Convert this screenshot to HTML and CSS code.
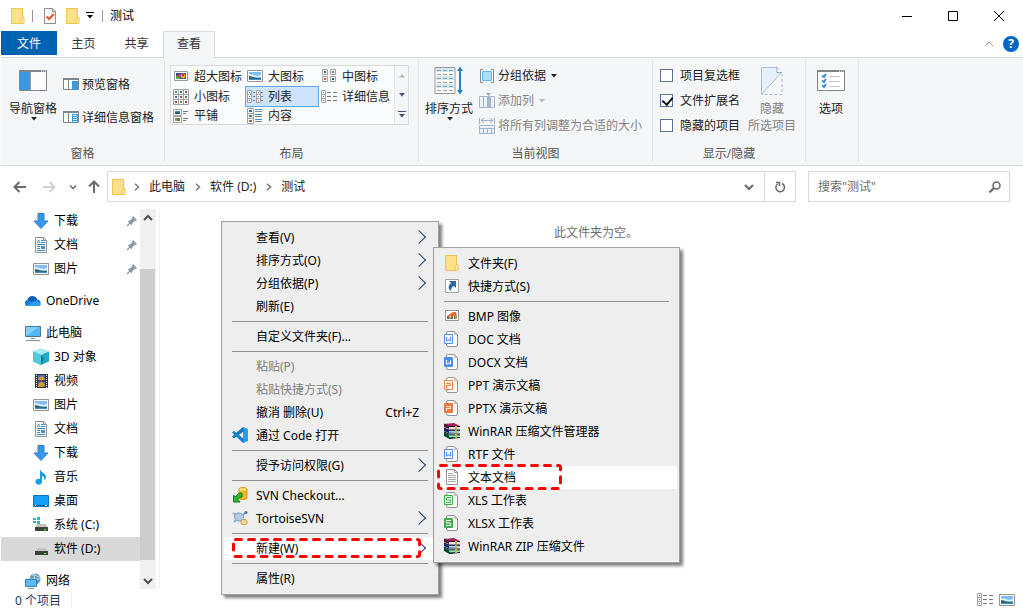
FILE: index.html
```html
<!DOCTYPE html>
<html lang="zh-CN">
<head>
    <meta charset="UTF-8">
    <meta name="viewport" content="width=device-width, initial-scale=1.0">
    <title>测试</title>
    <link rel="stylesheet" href="styles.css">
</head>
<body>
    <!-- shared icons -->
    <svg class="sprite" aria-hidden="true">
        <symbol id="i-folder" viewBox="0 0 16 16">
            <path d="M1.500 .5h11v11l1 4h-12z" fill="#ffe18a" stroke="#efc44f"/>
            <path d="M12.500 9.500h1.500v6h-3v-3.500z" fill="#ffeeb0" stroke="#efc44f"/>
        </symbol>
        <symbol id="i-check-page" viewBox="0 0 16 16">
            <path d="M2.500 .5h8l3 3v12h-11z" fill="#fafafa" stroke="#8d8d8d"/>
            <path d="M10.500 .5v3h3" fill="none" stroke="#8d8d8d"/>
            <path d="M4.500 8.500l2.500 2.500 5-5" fill="none" stroke="#f0561d" stroke-width="2"/>
        </symbol>
        <symbol id="i-down" viewBox="0 0 6 4"><path d="M0 0h6L3 3.500z" fill="currentColor"/></symbol>
        <symbol id="i-up" viewBox="0 0 6 4"><path d="M0 3.500h6L3 0z" fill="currentColor"/></symbol>
        <symbol id="i-more" viewBox="0 0 8 7"><path d="M0 0h8v1H0zM1 3h6L4 6.500z" fill="currentColor"/></symbol>
        <symbol id="i-chev-right" viewBox="0 0 6 8"><path d="M1 .8L4.500 4 1 7.200" fill="none" stroke="currentColor" stroke-width="1.500"/></symbol>
        <symbol id="i-chev-down" viewBox="0 0 10 8"><path d="M1 2l4 4 4-4" fill="none" stroke="currentColor" stroke-width="2"/></symbol>
        <symbol id="i-chev-up" viewBox="0 0 10 8"><path d="M1 6l4-4 4 4" fill="none" stroke="currentColor" stroke-width="2"/></symbol>
        <symbol id="i-nav-pane" viewBox="0 0 28 22">
            <path d="M.5 .5h27v20H.5z" fill="#fafcfd" stroke="#7e8790"/>
            <path d="M0 0h28v2H0z" fill="#7e8790"/>
            <path d="M22 1h1M24 1h1M26 1h1" stroke="#fff"/>
            <path d="M1 2h10v18H1z" fill="#3f97dd"/><path d="M11.500 2v18" stroke="#9aa3ab"/>
        </symbol>
        <symbol id="i-preview" viewBox="0 0 16 13">
            <path d="M.5 .5h15v11H.5z" fill="#fff" stroke="#7e8790"/>
            <path d="M0 0h16v2H0zM5 2h1v10H5z" fill="#7e8790"/><path d="M9 3h6v9H9z" fill="#3f97dd"/>
        </symbol>
        <symbol id="i-details-pane" viewBox="0 0 16 13">
            <use href="#i-preview"/>
            <path d="M10 4.500h4M10 6.500h4M10 8.500h4M10 10.500h4" stroke="#d7ebfb"/>
        </symbol>
        <symbol id="i-xl" viewBox="0 0 16 16">
            <path d="M1.500 3.500h13v9h-13z" fill="#fff" stroke="#989898"/>
            <path d="M3 5h10v6H3z" fill="#314ba8"/><path d="M3 8h4v3H3z" fill="#4fa94c"/>
            <circle cx="6" cy="7.500" r="1.500" fill="#d83a3a"/><circle cx="10" cy="8" r="2.500" fill="#f0a421"/><path d="M9 6h2v2H9z" fill="#c8351f"/>
        </symbol>
        <symbol id="i-picture" viewBox="0 0 16 16">
            <path d="M.5 2.500h15v11H.5z" fill="#fff" stroke="#939393"/>
            <path d="M2 4h12v8H2z" fill="#7fbdf0"/><path d="M2 6l5 1 3 1 4-1v2H2z" fill="#dcf0f7"/>
            <path d="M2 8c3 0 4 1 7 2h5v1H2z" fill="#326a76"/><path d="M2 11h12v1H2z" fill="#3e8cc8"/>
        </symbol>
        <symbol id="i-medium" viewBox="0 0 16 16">
            <path d="M1.500 1.500h5v5h-5zM9.500 1.500h5v5h-5zM1.500 8.500h5v5h-5zM9.500 8.500h5v5h-5z" fill="#fff" stroke="#a0a0a0"/>
            <path d="M3 3h2v2H3z" fill="#315fa8"/><path d="M11 3h2v2h-2z" fill="#3f8b87"/><path d="M3 10h2v2H3z" fill="#d04b31"/><path d="M11 10h2v2h-2z" fill="#3a4b96"/>
        </symbol>
        <symbol id="i-small" viewBox="0 0 16 16">
            <path d="M.5 .5h15v15H.5zM5.500 .5v15M10.500 .5v15M.5 5.500h15M.5 10.500h15" fill="#fff" stroke="#a0a0a0"/>
            <path d="M2 2h2v2H2zM12 7h2v2h-2zM7 12h2v2H7z" fill="#3e9150"/><path d="M7 2h2v2H7zM2 7h2v2H2z" fill="#3967ac"/><path d="M12 2h2v2h-2zM7 7h2v2H7zM2 12h2v2H2zM12 12h2v2h-2z" fill="#ae4545"/>
        </symbol>
        <symbol id="i-list" viewBox="0 0 16 16">
            <path d="M.5 1.500h4v12h-4zM.5 5.500h4M.5 9.500h4M9.500 1.500h4v12h-4zM9.500 5.500h4M9.500 9.500h4" fill="#fff" stroke="#a0a0a0"/>
            <path d="M2 3h1v1H2zM11 7h1v1h-1z" fill="#3967ac"/><path d="M2 7h1v1H2zM11 3h1v1h-1z" fill="#3e9150"/><path d="M2 11h1v1H2zM11 11h1v1h-1z" fill="#c94040"/>
            <path d="M6 3.500h2M6 7.500h2M6 11.500h2M14 3.500h2M14 7.500h2M14 11.500h2" stroke="#777"/>
        </symbol>
        <symbol id="i-details" viewBox="0 0 16 16">
            <path d="M.5 1.500h4v12h-4zM.5 5.500h4M.5 9.500h4" fill="#fff" stroke="#a0a0a0"/>
            <path d="M2 3h1v1H2z" fill="#3967ac"/><path d="M2 7h1v1H2z" fill="#3e9150"/><path d="M2 11h1v1H2z" fill="#c94040"/>
            <path d="M6 3.500h4M12 3.500h4M6 7.500h4M12 7.500h4M6 11.500h4M12 11.500h4" stroke="#777"/>
        </symbol>
        <symbol id="i-tiles" viewBox="0 0 16 16">
            <path d="M.5 1.500h8v6h-8zM.5 8.500h8v6h-8z" fill="#fff" stroke="#a0a0a0"/>
            <path d="M2 3h5v3H2z" fill="#4189bd"/><path d="M2 4.500h5V6H2z" fill="#1f4f50"/><path d="M2 10h3v3H2z" fill="#d77839"/><path d="M4 10h3v3H4z" fill="#47904d"/>
            <path d="M10 3.500h5M10 5.500h3M10 10.500h5M10 12.500h3" stroke="#777"/>
        </symbol>
        <symbol id="i-content" viewBox="0 0 16 16">
            <path d="M.5 .5h6v15h-6zM.5 5.500h6M.5 10.500h6" fill="#fff" stroke="#a0a0a0"/>
            <path d="M2 2h3v2H2z" fill="#3967ac"/><path d="M2 7h3v2H2z" fill="#3e9150"/><path d="M2 12h3v2H2z" fill="#b35b43"/>
            <path d="M8 1.500h7M8 6.500h7M8 11.500h7" stroke="#3d8fd4"/><path d="M8 3.500h7M8 8.500h7M8 13.500h7" stroke="#8a8a8a"/>
        </symbol>
        <symbol id="i-sort" viewBox="0 0 30 30">
            <path d="M1 1.500h20v26H1z" fill="#fff" stroke="#969696"/>
            <path d="M2 2h18v4H2zM2 10h18v4H2zM2 18h18v4H2z" fill="#cdeaf3"/>
            <path d="M3 4.500h16M3 8.500h16M3 12.500h16M3 16.500h16M3 20.500h16M3 24.500h16" stroke="#9b9b9b" stroke-dasharray="4 2"/>
            <path d="M26 3v23" stroke="#2580c7" stroke-width="2"/><path d="M23 5l3-4.500 3 4.500zM23 24l3 4.500 3-4.500z" fill="#2580c7"/>
        </symbol>
        <symbol id="i-group" viewBox="0 0 16 16">
            <path d="M4 1.500H1.500v13H4M12 1.500h2.500v13H12" fill="none" stroke="#7d8a96"/>
            <path d="M3.500 3.500h9v9h-9z" fill="#a9ddff" stroke="#66b5e8"/>
        </symbol>
        <symbol id="i-addcol" viewBox="0 0 16 16">
            <path d="M.5 3.500h15v11H.5zM4.500 3.500v11M11.500 3.500v11" fill="#eef3fa" stroke="#a3b4d0"/>
            <path d="M8 3h3v12H8z" fill="#a3b4d0"/><path d="M7 0h5L9.500 3z" fill="#8fa4c6"/>
        </symbol>
        <symbol id="i-fitcol" viewBox="0 0 16 16">
            <path d="M.5 0v6M15.500 0v6M2 2.500h12M5 0L2 2.500l3 2.500M11 0l3 2.500L11 5" fill="none" stroke="#9bafcf"/>
            <path d="M.5 7.500h15v8H.5zM.5 10.500h15M4.500 10.500v5M8.500 10.500v5M12.500 10.500v5" fill="#e9f0f9" stroke="#a3b4d0"/>
        </symbol>
        <symbol id="i-hide" viewBox="0 0 22 30">
            <path d="M.5 28.500V1.500h16l4 5z" fill="#e6effb" stroke="#adbdd5"/>
            <path d="M16 1.500v5h5" fill="#fff" stroke="#8fa4c6"/>
            <path d="M21 8v20.500H1" fill="none" stroke="#adbdd5" stroke-dasharray="3 2"/>
        </symbol>
        <symbol id="i-options" viewBox="0 0 28 22">
            <path d="M.5 .5h27v20H.5z" fill="#fff" stroke="#858585"/><path d="M0 0h28v2H0z" fill="#858585"/>
            <path d="M22 1h1M24 1h1M26 1h1" stroke="#fff"/>
            <path d="M5 5.500l2 1.500 2-3M5 10.500l2 1.500 2-3M5 15.500l2 1.500 2-3" fill="none" stroke="#3990d8" stroke-width="2"/>
            <path d="M12 6.500h11M12 11.500h11M12 16.500h11" stroke="#c3c3c3"/>
        </symbol>
        <symbol id="i-arrow" viewBox="0 0 14 12"><path d="M13 6H2M6.500 1L1.500 6l5 5" fill="none" stroke="currentColor" stroke-width="2"/></symbol>
        <symbol id="i-pin" viewBox="0 0 12 12">
            <path d="M7 1l4 4-1 1-1-.5L6.500 8 6 10.500 1.500 6 4 5.500 6.500 3 6 2z" fill="#8b9aa6"/><path d="M4.500 7.500L1 11" stroke="#8b9aa6" stroke-width="1.500"/>
        </symbol>
        <symbol id="i-download" viewBox="0 0 16 16"><path d="M5 .5h6V8h4l-7 7.500L1 8h4z" fill="#3a96e8" stroke="#2c7ecb"/></symbol>
        <symbol id="i-doc" viewBox="0 0 16 16">
            <path d="M2.500 .5h8l3 3v12h-11z" fill="#fff" stroke="#8b9298"/><path d="M10.500 .5v3h3" fill="none" stroke="#8b9298"/>
            <path d="M4 6l1.500-3L7 6M8 3.500h2M8 5.500h4M4 7.500h8M4 9.500h3M4 11.500h3M4 13.500h8" fill="none" stroke="#3288c2"/><path d="M8 9h4v3H8z" fill="#4d91b5"/>
        </symbol>
        <symbol id="i-cloud" viewBox="0 0 16 16">
            <path d="M3 13a3 3 0 0 1-.5-6A5 5 0 0 1 12 6.500 3.300 3.300 0 0 1 13 13z" fill="#1b7fdb"/>
            <path d="M2.500 7A5 5 0 0 1 12 6.500L8 9z" fill="#0a5cb0"/><path d="M3 13l5-4.500 4-.5 4 3a2.500 2.500 0 0 1-3 2z" fill="#29a0ef"/>
        </symbol>
        <symbol id="i-pc" viewBox="0 0 16 16">
            <path d="M.5 1.500h15v10H.5z" fill="#54b8f7" stroke="#4a7794"/><path d="M1 11V2h13z" fill="#83d0ff"/>
            <path d="M6 13h4v1H6zM1 15h14v1H1z" fill="#7b8d9b"/>
        </symbol>
        <symbol id="i-3d" viewBox="0 0 16 16">
            <path d="M8 0l8 2.500v10L8 16l-8-3.500v-10z" fill="#24a9c4"/><path d="M0 2.500L8 0l8 2.500L8 6z" fill="#a2eff5"/><path d="M0 2.500L8 6v10l-8-3.500z" fill="#55c9dc"/><path d="M8 6l3 4-3 6z" fill="#0d7f9c"/>
        </symbol>
        <symbol id="i-video" viewBox="0 0 16 16">
            <path d="M2 1h13v14H2z" fill="#333"/><path d="M5 2h7v12H5z" fill="#4471bb"/><path d="M5 5l4-2 3 3-2 2H6zM5 11l4-3 3 4-2 2H5z" fill="#d19b31"/><path d="M5 7.500h7v1H5z" fill="#202020"/>
            <path d="M3.500 2v13M13.500 2v13" stroke="#fff" stroke-dasharray="1 1"/>
        </symbol>
        <symbol id="i-music" viewBox="0 0 16 16"><path d="M7 0c1 4 6 4 6 8 0 2-1 3-2 3 1-3-1-4-2-4v5.500A3.300 3 0 1 1 7 10z" fill="#149bf0"/></symbol>
        <symbol id="i-desktop" viewBox="0 0 16 16">
            <path d="M.5 2.500h15v11H.5z" fill="#12a0fb" stroke="#0873bf"/><path d="M1 12h14v1H1z" fill="#08609e"/><path d="M2 12h1v1H2zM12 12h2v1h-2z" fill="#fff"/>
        </symbol>
        <symbol id="i-disk" viewBox="0 0 16 16">
            <path d="M4 7h9l2 4H2z" fill="#c4c4c4"/><path d="M2 10h13v4H2z" fill="#404040"/><path d="M11 12h2v1h-2z" fill="#3cff4b"/>
        </symbol>
        <symbol id="i-sysdisk" viewBox="0 0 16 16">
            <use href="#i-disk"/><path d="M0 1h3v2H0zM4 0h3v3H4zM0 4h3v2H0zM4 4h3v3H4z" fill="#18b5ef"/>
        </symbol>
        <symbol id="i-network" viewBox="0 0 16 16">
            <circle cx="10" cy="6" r="5.500" fill="#6095b5"/><path d="M7 2c4-1 5 2 8 2M9 1l1 10M5 6h10" stroke="#c5e0ed" fill="none"/>
            <path d="M.5 6.500h11v7H.5z" fill="#5dbaf6" stroke="#2d83bb"/><path d="M3 15.500h6" stroke="#78909e"/>
        </symbol>
        <symbol id="i-vscode" viewBox="0 0 16 16">
            <path d="M11 0l5 2v12l-5 2z" fill="#25a0e8"/><path d="M11 0L0 9.500l2 2L12 4z" fill="#1577bd"/><path d="M0 5.500l2-1.500 10 8-1 4z" fill="#1082ce"/>
        </symbol>
        <symbol id="i-svn" viewBox="0 0 16 16">
            <path d="M7 2c0-2 8-2 8 0v9c0 2-8 2-8 0z" fill="#f3b62a" stroke="#d39a18"/><ellipse cx="11" cy="2.500" rx="3.500" ry="1.300" fill="#ffe37b"/>
            <path d="M10 6C7 6 5 7 4 10L1.500 8.500V15h6.500l-2-2.500c1-2 2-2 4-2.500z" fill="#2db92b" stroke="#187a18"/>
        </symbol>
        <symbol id="i-tortoise" viewBox="0 0 16 16">
            <path d="M1 3l4 3M2 12l3-3M11 5l3-3" stroke="#8fb0d2" stroke-width="2"/><ellipse cx="7" cy="7" rx="4.500" ry="4" fill="#b4cbec" stroke="#7c9bcb"/>
            <circle cx="14" cy="2.500" r="1.500" fill="#4b779e"/><path d="M9 11c0-2 6-2 6 0v2c0 2-6 2-6 0z" fill="#f3dc9c" stroke="#c9a14a"/>
        </symbol>
        <symbol id="i-shortcut" viewBox="0 0 16 16">
            <path d="M1.500 1.500h13v13h-13z" fill="#fff" stroke="#a5a5a5"/><path d="M5 3h7v7l-2-2c-2 1-3 2-3 5-4-3-2-6 0-8z" fill="#2c65a8"/>
        </symbol>
        <symbol id="i-bmp" viewBox="0 0 16 16">
            <path d="M1.500 2.500h13v10h-13z" fill="#fff" stroke="#9a9a9a"/><path d="M3 8l3-2 3-2h3l1 4z" fill="#ef6a32"/><path d="M3 8h2v3H3zM7 8h2v3H7zM10 8h1v3h-1z" fill="#8a6241"/><path d="M11 7h2v4h-2zM5 9h2v2H5z" fill="#8aa874"/>
        </symbol>
        <symbol id="i-page" viewBox="0 0 16 16">
            <path d="M2.500 3V2q0-1.500 1.500-1.500h6.500l3 3V14q0 1.500-1.500 1.500H4q-1.500 0-1.500-1.500z" fill="#fff" stroke="#949494"/><path d="M10 0v4h4z" fill="#c2c2c2"/>
        </symbol>
        <symbol id="i-doc-old" viewBox="0 0 16 16">
            <use href="#i-page"/><path d="M.5 3.500h8v9h-8z" fill="#fff" stroke="#4f8bee"/><path d="M2.500 6v4h1L4.500 8.500 5.500 10h1V6" fill="none" stroke="#4f8bee"/>
        </symbol>
        <symbol id="i-doc-new" viewBox="0 0 16 16">
            <use href="#i-page"/><rect y="3" width="9" height="10" rx="1" fill="#4f8bee"/><path d="M2.500 6v4h1L4.500 8.500 5.500 10h1V6" fill="none" stroke="#fff"/>
        </symbol>
        <symbol id="i-ppt-old" viewBox="0 0 16 16">
            <use href="#i-page"/><path d="M.5 3.500h8v9h-8z" fill="#fff" stroke="#f47d4b"/><path d="M2 6.500h4.500v2H2.500V11" fill="none" stroke="#f47d4b"/>
        </symbol>
        <symbol id="i-ppt-new" viewBox="0 0 16 16">
            <use href="#i-page"/><rect y="3" width="9" height="10" rx="1" fill="#f5733c"/><path d="M2 6.500h4.500v2H2.500V11" fill="none" stroke="#fff"/>
        </symbol>
        <symbol id="i-xls-old" viewBox="0 0 16 16">
            <use href="#i-page"/><path d="M.5 3.500h8v9h-8z" fill="#fff" stroke="#3fae49"/><path d="M7 5.500H2.500v2.500h4v2.500H2" fill="none" stroke="#3fae49"/>
        </symbol>
        <symbol id="i-xls-new" viewBox="0 0 16 16">
            <use href="#i-page"/><rect y="3" width="9" height="10" rx="1" fill="#3fae49"/><path d="M7 5.500H2.500v2.500h4v2.500H2" fill="none" stroke="#fff"/>
        </symbol>
        <symbol id="i-txt" viewBox="0 0 16 16">
            <path d="M2.500 .5h8l3 3v12h-11z" fill="#fff" stroke="#929292"/><path d="M10.500 .5v3h3" fill="none" stroke="#929292"/>
            <path d="M4 4.500h5M4 6.500h8M4 8.500h8M4 10.500h8M4 12.500h8" stroke="#a8a8a8"/>
        </symbol>
        <symbol id="i-rar" viewBox="0 0 16 16">
            <!-- three stacked books, spines on the left -->
            <path d="M0 1l10-1 6 3v2H5L0 3z" fill="#a3215a"/><path d="M0 2l5 2v2L0 4z" fill="#5d1035"/><path d="M5 4h11v1.500H5z" fill="#f0dce4"/>
            <path d="M0 5l5 2h11v2l-11 1-5-2z" fill="#2455b4"/><path d="M5 8h11v1.500H5z" fill="#9fd4f5"/><path d="M0 6l5 2v2L0 8z" fill="#14295e"/>
            <path d="M0 9l5 2.500h11V14l-11 2-5-3z" fill="#15805c"/><path d="M5 12.500h11V14H5z" fill="#8fe0b8"/><path d="M0 10l5 2.500V15l-5-2.500z" fill="#0b3b2b"/>
            <path d="M0 1l5 2.500h11M0 5l5 2h11M0 9l5 2h11M5 15.500l11-1" fill="none" stroke="#16162a"/>
            <path d="M11 3h2v3h-2zM11 7h2v3h-2zM11 11h2v4h-2z" fill="#d8b13c"/>
        </symbol>
    </svg>

    <div class="window">
        <header class="titlebar">
            <svg class="icon"><use href="#i-folder"/></svg>
            <span class="divider"></span>
            <button class="quick" aria-label="属性"><svg class="icon"><use href="#i-check-page"/></svg></button>
            <button class="quick" aria-label="新建文件夹"><svg class="icon"><use href="#i-folder"/></svg></button>
            <button class="quick customize" aria-label="自定义"><svg width="8" height="7"><use href="#i-more"/></svg></button>
            <span class="divider"></span>
            <h1>测试</h1>
            <div class="window-buttons">
                <button aria-label="最小化"><svg width="12" height="12"><path d="M1 6.500h10" stroke="#000"/></svg></button>
                <button aria-label="最大化"><svg width="12" height="12"><path d="M1.500 1.500h9v9h-9z" fill="none" stroke="#000"/></svg></button>
                <button aria-label="关闭"><svg width="12" height="12"><path d="M1 1l10 10M11 1L1 11" stroke="#000"/></svg></button>
            </div>
        </header>

        <nav class="tabs">
            <button class="tab file">文件</button>
            <button class="tab">主页</button>
            <button class="tab">共享</button>
            <button class="tab active">查看</button>
            <div class="tab-tools">
                <button class="collapse" aria-label="折叠"><svg width="10" height="8" viewBox="0 0 10 8"><path d="M1 6l4-4 4 4" fill="none" stroke="#999"/></svg></button>
                <button class="help" aria-label="帮助">?</button>
            </div>
        </nav>

        <div class="ribbon">
            <section class="group panes">
                <div class="group-body">
                    <button class="big">
                        <span class="big-icon"><svg width="28" height="22"><use href="#i-nav-pane"/></svg></span>
                        导航窗格
                        <svg class="arrow" width="6" height="4"><use href="#i-down"/></svg>
                    </button>
                    <div class="rows">
                        <button class="row"><svg width="16" height="13"><use href="#i-preview"/></svg>预览窗格</button>
                        <button class="row"><svg width="16" height="13"><use href="#i-details-pane"/></svg>详细信息窗格</button>
                    </div>
                </div>
                <h2>窗格</h2>
            </section>

            <section class="group layout">
                <div class="group-body">
                    <div class="gallery">
                        <div class="gallery-items">
                            <button><svg class="icon"><use href="#i-xl"/></svg>超大图标</button>
                            <button><svg class="icon"><use href="#i-picture"/></svg>大图标</button>
                            <button><svg class="icon"><use href="#i-medium"/></svg>中图标</button>
                            <button><svg class="icon"><use href="#i-small"/></svg>小图标</button>
                            <button class="selected"><svg class="icon"><use href="#i-list"/></svg>列表</button>
                            <button><svg class="icon"><use href="#i-details"/></svg>详细信息</button>
                            <button><svg class="icon"><use href="#i-tiles"/></svg>平铺</button>
                            <button><svg class="icon"><use href="#i-content"/></svg>内容</button>
                        </div>
                        <div class="gallery-scroll">
                            <button class="off" aria-label="上一行"><svg width="6" height="4"><use href="#i-up"/></svg></button>
                            <button aria-label="下一行"><svg width="6" height="4"><use href="#i-down"/></svg></button>
                            <button aria-label="更多"><svg width="8" height="7"><use href="#i-more"/></svg></button>
                        </div>
                    </div>
                </div>
                <h2>布局</h2>
            </section>

            <section class="group current">
                <div class="group-body">
                    <button class="big">
                        <span class="big-icon"><svg width="30" height="30"><use href="#i-sort"/></svg></span>
                        排序方式
                        <svg class="arrow" width="6" height="4"><use href="#i-down"/></svg>
                    </button>
                    <div class="rows">
                        <button class="row"><svg class="icon"><use href="#i-group"/></svg>分组依据<svg class="more" width="6" height="4"><use href="#i-down"/></svg></button>
                        <button class="row" disabled><svg class="icon"><use href="#i-addcol"/></svg>添加列<svg class="more" width="6" height="4"><use href="#i-down"/></svg></button>
                        <button class="row" disabled><svg class="icon"><use href="#i-fitcol"/></svg>将所有列调整为合适的大小</button>
                    </div>
                </div>
                <h2>当前视图</h2>
            </section>

            <section class="group show">
                <div class="group-body">
                    <div class="rows">
                        <label class="row"><input type="checkbox">项目复选框</label>
                        <label class="row"><input type="checkbox" checked>文件扩展名</label>
                        <label class="row"><input type="checkbox">隐藏的项目</label>
                    </div>
                    <button class="big" disabled>
                        <span class="big-icon"><svg width="22" height="30"><use href="#i-hide"/></svg></span>
                        隐藏<br>所选项目
                    </button>
                </div>
                <h2>显示/隐藏</h2>
            </section>

            <section class="group options">
                <div class="group-body">
                    <button class="big">
                        <span class="big-icon"><svg width="28" height="22"><use href="#i-options"/></svg></span>
                        选项
                    </button>
                </div>
            </section>
        </div>

        <div class="navbar">
            <div class="history">
                <button aria-label="后退"><svg width="14" height="12"><use href="#i-arrow"/></svg></button>
                <button class="forward" aria-label="前进"><svg width="14" height="12"><use href="#i-arrow"/></svg></button>
                <button class="recent" aria-label="最近"><svg width="8" height="6"><use href="#i-chev-down"/></svg></button>
                <button class="up" aria-label="向上"><svg width="14" height="12"><use href="#i-arrow"/></svg></button>
            </div>
            <div class="address">
                <svg class="icon"><use href="#i-folder"/></svg>
                <svg class="crumb-sep" width="6" height="8"><use href="#i-chev-right"/></svg>
                <a href="#">此电脑</a>
                <svg class="crumb-sep" width="6" height="8"><use href="#i-chev-right"/></svg>
                <a href="#">软件 (D:)</a>
                <svg class="crumb-sep" width="6" height="8"><use href="#i-chev-right"/></svg>
                <a href="#">测试</a>
                <button class="drop" aria-label="以前的位置"><svg width="10" height="8"><use href="#i-chev-down"/></svg></button>
                <button class="refresh" aria-label="刷新"><svg width="12" height="12" viewBox="0 0 12 12"><path d="M8 2.500A4.300 4.300 0 1 1 3.500 3M2 1.500h3.500V5" fill="none" stroke="#666" stroke-width="1.500"/></svg></button>
            </div>
            <div class="search">
                <input type="text" placeholder='搜索"测试"' aria-label="搜索">
                <svg width="12" height="12" viewBox="0 0 12 12"><circle cx="7.500" cy="4.500" r="3.500" fill="none" stroke="#666" stroke-width="1.500"/><path d="M5 7l-4.500 4.500" stroke="#666" stroke-width="2"/></svg>
            </div>
        </div>

        <div class="main">
            <aside class="sidebar">
                <ul class="tree">
                    <li class="sub"><svg class="icon"><use href="#i-download"/></svg>下载<svg class="pin"><use href="#i-pin"/></svg></li>
                    <li class="sub"><svg class="icon"><use href="#i-doc"/></svg>文档<svg class="pin"><use href="#i-pin"/></svg></li>
                    <li class="sub"><svg class="icon"><use href="#i-picture"/></svg>图片<svg class="pin"><use href="#i-pin"/></svg></li>
                    <li class="top"><svg class="icon"><use href="#i-cloud"/></svg>OneDrive</li>
                    <li class="top"><svg class="icon"><use href="#i-pc"/></svg>此电脑</li>
                    <li class="sub"><svg class="icon"><use href="#i-3d"/></svg>3D 对象</li>
                    <li class="sub"><svg class="icon"><use href="#i-video"/></svg>视频</li>
                    <li class="sub"><svg class="icon"><use href="#i-picture"/></svg>图片</li>
                    <li class="sub"><svg class="icon"><use href="#i-doc"/></svg>文档</li>
                    <li class="sub"><svg class="icon"><use href="#i-download"/></svg>下载</li>
                    <li class="sub"><svg class="icon"><use href="#i-music"/></svg>音乐</li>
                    <li class="sub"><svg class="icon"><use href="#i-desktop"/></svg>桌面</li>
                    <li class="sub"><svg class="icon"><use href="#i-sysdisk"/></svg>系统 (C:)</li>
                    <li class="sub current-drive"><svg class="icon"><use href="#i-disk"/></svg>软件 (D:)</li>
                    <li class="top"><svg class="icon"><use href="#i-network"/></svg>网络</li>
                </ul>
                <div class="scrollbar">
                    <button aria-label="向上滚动"><svg width="10" height="8"><use href="#i-chev-up"/></svg></button>
                    <div class="track"><div class="thumb"></div></div>
                    <button aria-label="向下滚动"><svg width="10" height="8"><use href="#i-chev-down"/></svg></button>
                </div>
            </aside>
            <main class="files">
                <p>此文件夹为空。</p>
            </main>
        </div>

        <footer class="status">
            <span>0 个项目</span>
            <div class="view-buttons">
                <button aria-label="详细信息"><svg class="icon"><use href="#i-details"/></svg></button>
                <button aria-label="大图标"><svg class="icon"><use href="#i-picture"/></svg></button>
            </div>
        </footer>
    </div>

    <ul class="menu context-menu">
        <li><button class="more">查看(V)</button></li>
        <li><button class="more">排序方式(O)</button></li>
        <li><button class="more">分组依据(P)</button></li>
        <li><button>刷新(E)</button></li>
        <li class="line"></li>
        <li><button>自定义文件夹(F)...</button></li>
        <li class="line"></li>
        <li><button disabled>粘贴(P)</button></li>
        <li><button disabled>粘贴快捷方式(S)</button></li>
        <li><button>撤消 删除(U)<span class="key">Ctrl+Z</span></button></li>
        <li><button><svg class="icon"><use href="#i-vscode"/></svg>通过 Code 打开</button></li>
        <li class="line"></li>
        <li><button class="more">授予访问权限(G)</button></li>
        <li class="line"></li>
        <li><button><svg class="icon"><use href="#i-svn"/></svg>SVN Checkout...</button></li>
        <li><button class="more"><svg class="icon"><use href="#i-tortoise"/></svg>TortoiseSVN</button></li>
        <li class="line"></li>
        <li class="marked">
            <button class="more hot">新建(W)</button>
            <svg class="mark mark-new"><rect x="1.500" y="2.500" width="186" height="17" rx="2"/></svg>
        </li>
        <li class="line"></li>
        <li><button>属性(R)</button></li>
    </ul>

    <ul class="menu new-menu">
        <li><button><svg class="icon"><use href="#i-folder"/></svg>文件夹(F)</button></li>
        <li><button><svg class="icon"><use href="#i-shortcut"/></svg>快捷方式(S)</button></li>
        <li class="line"></li>
        <li><button><svg class="icon"><use href="#i-bmp"/></svg>BMP 图像</button></li>
        <li><button><svg class="icon"><use href="#i-doc-old"/></svg>DOC 文档</button></li>
        <li><button><svg class="icon"><use href="#i-doc-new"/></svg>DOCX 文档</button></li>
        <li><button><svg class="icon"><use href="#i-ppt-old"/></svg>PPT 演示文稿</button></li>
        <li><button><svg class="icon"><use href="#i-ppt-new"/></svg>PPTX 演示文稿</button></li>
        <li><button><svg class="icon"><use href="#i-rar"/></svg>WinRAR 压缩文件管理器</button></li>
        <li><button><svg class="icon"><use href="#i-doc-old"/></svg>RTF 文件</button></li>
        <li class="marked">
            <button class="hot"><svg class="icon"><use href="#i-txt"/></svg>文本文档</button>
            <svg class="mark mark-text"><rect x="1.500" y="2.500" width="122" height="23" rx="2"/></svg>
        </li>
        <li><button><svg class="icon"><use href="#i-xls-old"/></svg>XLS 工作表</button></li>
        <li><button><svg class="icon"><use href="#i-xls-new"/></svg>XLSX 工作表</button></li>
        <li><button><svg class="icon"><use href="#i-rar"/></svg>WinRAR ZIP 压缩文件</button></li>
    </ul>
</body>
</html>
```

FILE: styles.css
```css
* {
    box-sizing: border-box;
}

body {
    margin: 0;
    font-family: "Noto Sans", "Noto Sans CJK SC", sans-serif;
    font-size: 12px;
    line-height: 17px;
    color: #000;
    background-color: #fff;
}

button {
    font: inherit;
    color: inherit;
    background: none;
    border: none;
    padding: 0;
    margin: 0;
    white-space: nowrap;
}

h1, h2, p, ul {
    margin: 0;
    padding: 0;
    font-size: 12px;
    font-weight: normal;
    list-style: none;
}

svg {
    display: block;
    flex: none;
}

.sprite {
    position: absolute;
    width: 0;
    height: 0;
}

.icon {
    width: 16px;
    height: 16px;
}

.window {
    display: flex;
    flex-direction: column;
    height: 100vh;
    padding-left: 1px;
    overflow: hidden;
}

/* Title bar */
.titlebar {
    display: flex;
    align-items: center;
    flex: none;
    height: 31px;
    padding: 0 1px 0 9px;
}

.divider {
    width: 1px;
    height: 12px;
    margin: 0 7px 0 6px;
    background-color: #999;
}

.quick {
    margin-left: 2px;
    margin-right: 5px;
}

.quick.customize {
    margin-left: 0;
    margin-right: 2px;
}

.titlebar h1 {
    flex: 1;
}

.window-buttons {
    display: flex;
}

.window-buttons button {
    display: flex;
    align-items: center;
    justify-content: center;
    width: 46px;
    height: 31px;
}

/* Tabs */
.tabs {
    display: flex;
    flex: none;
    height: 27px;
    border-bottom: 1px solid #dadbdc;
}

.tab {
    width: 53px;
    height: 24px;
    color: #333;
}

.tab.file {
    width: 56px;
    background-color: #0063b1;
    color: #fff;
}

.tab.active {
    width: 52px;
    height: 27px;
    padding-bottom: 3px;
    border: 1px solid #dadbdc;
    border-bottom: none;
    background-color: #f5f6f7;
}

.tab-tools {
    display: flex;
    align-items: center;
    gap: 9px;
    margin-left: auto;
    padding-right: 4px;
}

.help {
    width: 16px;
    height: 16px;
    border-radius: 50%;
    background-color: #0067c5;
    color: #fff;
    font-weight: bold;
    line-height: 16px;
}

/* Ribbon */
.ribbon {
    display: flex;
    flex: none;
    height: 108px;
    padding: 2px 0 3px;
    background-color: #f5f6f7;
    border-bottom: 1px solid #dadbdc;
}

.group {
    display: flex;
    flex-direction: column;
    flex: none;
    border-right: 1px solid #e2e3e4;
    color: #222;
}

.group-body {
    display: flex;
    flex: 1;
}

.group h2 {
    height: 18px;
    line-height: 20px;
    text-align: center;
    color: #555;
}

.panes { width: 164px; }
.layout { width: 254px; }
.current { width: 234px; }
.show { width: 153px; }
.options { width: 53px; }

.big {
    position: relative;
    align-self: flex-start;
    width: 56px;
    padding-top: 6px;
}

.big-icon {
    display: flex;
    align-items: center;
    justify-content: center;
    height: 30px;
    margin-bottom: 4px;
}

.big .arrow {
    position: absolute;
    left: 26px;
    bottom: -4px;
}

.big:disabled, .row:disabled {
    color: #838383;
}

.rows {
    padding-top: 3px;
}

.row {
    display: flex;
    align-items: center;
    gap: 3px;
    height: 25px;
}

.row .more {
    margin-left: 2px;
}

.row:disabled .more {
    color: #b5b5b5;
}

.panes .group-body {
    padding-left: 4px;
}

.panes .rows {
    padding: 8px 0 0 2px;
}

.panes .row {
    height: 33px;
}

.current .group-body {
    padding-left: 2px;
}

.current .rows {
    padding-left: 2px;
}

.show .rows {
    padding-left: 7px;
}

.show .row {
    gap: 7px;
    width: 84px;
    white-space: nowrap;
}

.show input {
    appearance: none;
    width: 13px;
    height: 13px;
    margin: 0;
    border: 1px solid #5b7199;
    background-color: #fff;
}

.show input:checked::after {
    content: "";
    display: block;
    width: 5px;
    height: 8px;
    margin: 0 0 0 3px;
    border: solid #111;
    border-width: 0 2px 2px 0;
    transform: rotate(40deg);
}

.options .big {
    width: 50px;
}

/* Layout gallery */
.gallery {
    display: flex;
    width: 239px;
    height: 60px;
    margin: 5px 0 0 5px;
    border: 1px solid #dadbdc;
    background-color: #fbfcfd;
}

.gallery-items {
    display: grid;
    grid-template-columns: 74px 74px 75px;
    grid-template-rows: 20px 21px 17px;
    flex: 1;
}

.gallery-items button {
    display: flex;
    align-items: center;
    gap: 5px;
    padding-left: 2px;
}

.gallery-items .selected {
    padding-left: 1px;
    border: 1px solid #66a7e8;
    background-color: #cce4ff;
}

.gallery-scroll {
    display: flex;
    flex-direction: column;
    width: 14px;
    border-left: 1px solid #e4e5e6;
    background-color: #f5f6f7;
    color: #45566e;
}

.gallery-scroll button {
    display: flex;
    align-items: center;
    justify-content: center;
    flex: 1;
}

.gallery-scroll .off {
    color: #b8b8b8;
}

/* Address and search */
.navbar {
    display: flex;
    flex: none;
    gap: 12px;
    height: 43px;
    padding: 5px 13px 7px 0;
}

.history {
    display: flex;
    align-items: center;
    gap: 15px;
    width: 106px;
    margin-right: -12px;
    padding-left: 12px;
    color: #6a6a6a;
}

.history .forward {
    color: #d2d2d2;
    transform: scaleX(-1);
}

.history .recent {
    margin-right: -5px;
    margin-left: -2px;
}

.history .up {
    transform: rotate(90deg);
}

.address {
    display: flex;
    align-items: center;
    flex: 1;
    border: 1px solid #d9d9d9;
    padding-left: 3px;
}

.address a {
    color: #222;
    text-decoration: none;
}

.address .icon {
    margin-right: -3px;
}

.crumb-sep {
    margin: 0 9px 0 10px;
    color: #777;
}

.address button {
    display: flex;
    align-items: center;
    justify-content: center;
    width: 31px;
    height: 100%;
    color: #666;
}

.address .drop {
    margin-left: auto;
}

.address .refresh {
    border-left: 1px solid #d9d9d9;
}

.search {
    display: flex;
    align-items: center;
    width: 202px;
    padding: 0 8px 0 9px;
    border: 1px solid #d9d9d9;
}

.search input {
    flex: 1;
    min-width: 0;
    padding: 0;
    border: none;
    outline: none;
    font: inherit;
}

.search input::placeholder {
    color: #6d6d6d;
}

/* Navigation tree */
.main {
    display: flex;
    flex: 1;
    min-height: 0;
}

.sidebar {
    display: flex;
    width: 159px;
    padding-right: 3px;
    border-right: 1px solid #f0f0f0;
}

.tree {
    flex: 1;
    overflow: hidden;
}

.tree li {
    display: flex;
    align-items: center;
    gap: 5px;
    height: 24px;
    padding-bottom: 1px;
}

.tree .sub {
    padding-left: 32px;
}

.tree .top {
    padding-left: 24px;
}

.tree .sub + .top, .tree .top + .top {
    margin-top: 8px;
}

.tree .current-drive {
    background-color: #d9d9d9;
}

.pin {
    width: 12px;
    height: 12px;
    margin-left: auto;
    margin-right: 2px;
}

.scrollbar {
    display: flex;
    flex-direction: column;
    width: 16px;
    background-color: #f0f0f0;
    color: #505050;
}

.scrollbar button {
    display: flex;
    align-items: center;
    justify-content: center;
    height: 17px;
}

.track {
    display: flex;
    flex-direction: column;
    justify-content: flex-end;
    flex: 1;
    padding-bottom: 12px;
}

.thumb {
    height: 87%;
    margin-right: 1px;
    background-color: #cdcdcd;
}

.files {
    flex: 1;
    padding: 15px 0 0 9px;
    text-align: center;
    color: #6d6d6d;
}

/* Status bar */
.status {
    display: flex;
    align-items: center;
    justify-content: space-between;
    flex: none;
    height: 24px;
    padding: 0 8px 2px 14px;
    color: #1e395b;
}

.status span {
    padding-right: 10px;
    border-right: 1px solid #f0f0f0;
}

.view-buttons {
    display: flex;
    gap: 6px;
}

/* Context menus */
.menu {
    position: absolute;
    padding: 4px 2px;
    border: 1px solid #a0a0a0;
    background-color: #eee;
    box-shadow: 3px 3px 3px rgba(0, 0, 0, 0.5);
}

.context-menu {
    left: 221px;
    top: 221px;
    width: 218px;
}

.new-menu {
    left: 433px;
    top: 247px;
    width: 247px;
}

.menu button {
    position: relative;
    display: flex;
    align-items: center;
    width: 100%;
    height: 23px;
    padding: 0 17px 0 32px;
    text-align: left;
}

.menu button:disabled {
    color: #808080;
}

.menu .hot {
    background-color: #fff;
}

.menu .icon {
    margin: 0 8px 1px -24px;
}

.menu .key {
    margin-left: auto;
}

.menu .line {
    height: 1px;
    margin: 3px 8px;
    background-color: #919191;
}

.menu .more::after {
    content: "";
    position: absolute;
    right: 12px;
    top: 6px;
    width: 9px;
    height: 9px;
    border: solid #26436f;
    border-width: 1px 1px 0 0;
    transform: rotate(45deg);
}

.marked {
    position: relative;
}

/* red dashed frames round the two highlighted commands */
.mark {
    position: absolute;
    fill: none;
    stroke: #f00;
    stroke-width: 3px;
    stroke-linecap: round;
    stroke-dasharray: 6 7;
}

.mark-new {
    left: 8px;
    top: 0;
    width: 190px;
    height: 21px;
}

.mark-text {
    left: 1px;
    top: -3px;
    width: 126px;
    height: 28px;
}
```
